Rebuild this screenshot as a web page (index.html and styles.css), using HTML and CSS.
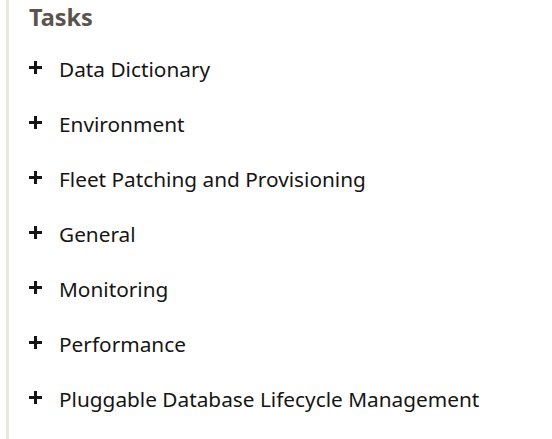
FILE: index.html
```html
<!DOCTYPE html>
<html>
<head>
<meta charset="utf-8">
<link rel="stylesheet" href="styles.css">
</head>
<body>
<div class="panel">
  <h2 class="title">Tasks</h2>
  <ul class="tasks">
    <li class="task"><span class="plus"></span><span class="label">Data Dictionary</span></li>
    <li class="task"><span class="plus"></span><span class="label">Environment</span></li>
    <li class="task"><span class="plus"></span><span class="label">Fleet Patching and Provisioning</span></li>
    <li class="task"><span class="plus"></span><span class="label">General</span></li>
    <li class="task"><span class="plus"></span><span class="label">Monitoring</span></li>
    <li class="task"><span class="plus"></span><span class="label">Performance</span></li>
    <li class="task"><span class="plus"></span><span class="label">Pluggable Database Lifecycle Management</span></li>
  </ul>
</div>
</body>
</html>
```
FILE: styles.css
```css
html, body {
  margin: 0;
  padding: 0;
  background: #fff;
}
body {
  font-family: "Noto Sans", "Open Sans", sans-serif;
  color: #161513;
}
.panel {
  margin-left: 6px;
  border-left: 3px solid #e9e7e3;
  padding: 2px 0 0 20px;
  min-height: 439px;
  box-sizing: border-box;
}
.title {
  margin: 0;
  font-size: 23.5px;
  font-weight: 700;
  color: #5b534e;
  line-height: 30px;
}
.tasks {
  list-style: none;
  margin: 24px 0 0 0;
  padding: 0;
}
.task {
  display: flex;
  align-items: flex-start;
  height: 55px;
}
.plus {
  position: relative;
  width: 13px;
  height: 13px;
  margin-top: 5px;
  margin-right: 17px;
  flex: none;
}
.plus::before, .plus::after {
  content: "";
  position: absolute;
  background: #161513;
}
.plus::before {
  left: 0;
  top: 5px;
  width: 13px;
  height: 3px;
}
.plus::after {
  left: 5px;
  top: 0;
  width: 3px;
  height: 13px;
}
.label {
  font-size: 20.8px;
  line-height: 26px;
}
```
